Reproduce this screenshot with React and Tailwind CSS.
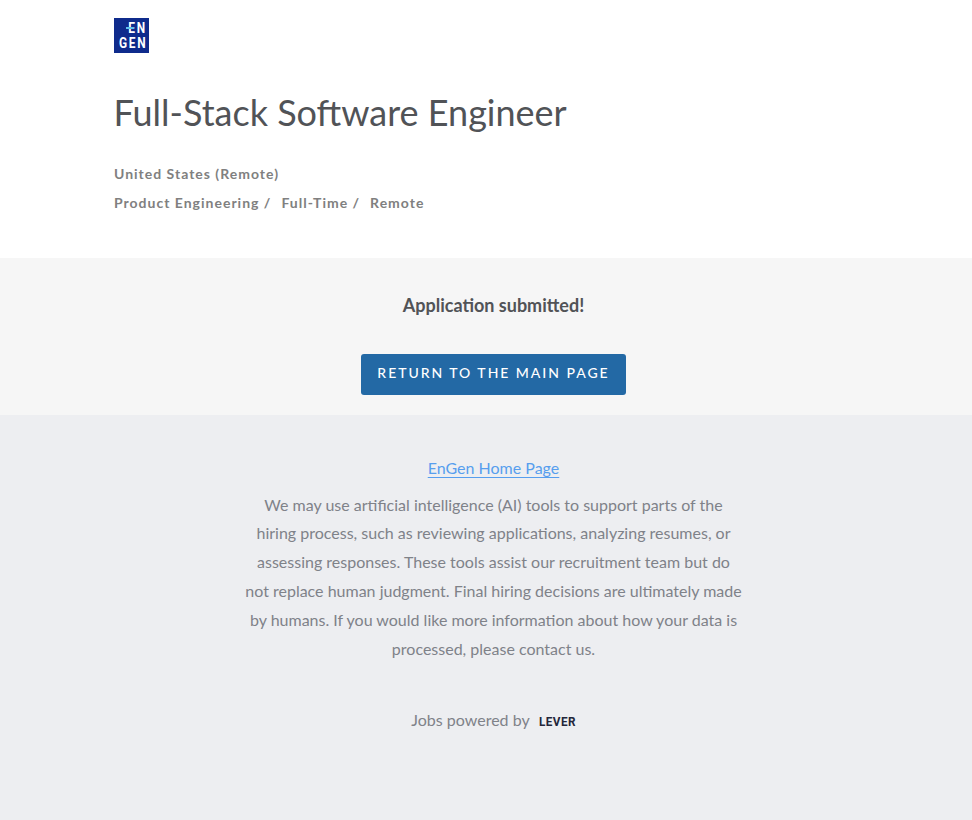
import React from 'react'

function Logo() {
  return (
    <div className="relative w-[35px] h-[35px] bg-[#0f2b8c] text-white flex flex-col items-end justify-center pr-[2px] font-['Roboto',sans-serif] font-bold text-[14px] leading-[14.5px] tracking-[2px]">
      <span className="origin-right scale-x-[0.85]">EN</span>
      <span className="origin-right scale-x-[0.85]">GEN</span>
      <span className="absolute left-[12px] top-[9px] w-[8px] h-[2px] bg-[#5fc3ee]"></span>
    </div>
  )
}

export default function App() {
  return (
    <div className="min-h-[820px] flex flex-col font-['Lato',sans-serif] bg-[#edeef1]">
      <div className="bg-white h-[258px] pl-[114px] pt-[18px]">
        <Logo />
        <h1 className="mt-[37px] -ml-[0.5px] text-[36px] leading-[45px] text-[#515357]">Full-Stack Software Engineer</h1>
        <p className="mt-[29px] text-[14px] leading-[20px] font-bold tracking-[1px] text-[#808080]">United States (Remote)</p>
        <div className="mt-[9px] flex text-[14px] leading-[20px] font-bold tracking-[1px] text-[#808080]">
          <span className="mr-[10px]">Product Engineering /</span>
          <span className="mr-[10px]">Full-Time /</span>
          <span>Remote</span>
        </div>
      </div>

      <div className="bg-[#f6f6f6] h-[157px] flex flex-col items-center pl-[15px] pt-[35px]">
        <p className="text-[18px] leading-[24px] font-bold text-[#515357]">Application submitted!</p>
        <button className="mt-[37px] w-[265px] h-[41px] pb-[5px] rounded-[3px] bg-[#2369a5] text-white text-[14px] font-medium tracking-[1.96px]">RETURN TO THE MAIN PAGE</button>
      </div>

      <div className="flex flex-col items-center pl-[15px] pt-[39px] text-[#7f8289] text-[16px]">
        <a href="#" className="leading-[28px] text-[#579eee] underline underline-offset-[3px]">EnGen Home Page</a>
        <p className="mt-[8.6px] w-[500px] text-center leading-[28.8px]">
          We may use artificial intelligence (AI) tools to support parts of the hiring process, such as reviewing applications, analyzing resumes, or assessing responses. These tools assist our recruitment team but do not replace human judgment. Final hiring decisions are ultimately made by humans. If you would like more information about how your data is processed, please contact us.
        </p>
        <div className="mt-[41.4px] flex items-center leading-[28px]">
          <span>Jobs powered by</span>
          <span className="ml-[9px] pt-[3px] w-[37px] text-[13px] tracking-[0.5px] font-['Roboto',sans-serif] font-bold text-[#23263a] origin-left scale-x-[0.9]">LEVER</span>
        </div>
      </div>
    </div>
  )
}
